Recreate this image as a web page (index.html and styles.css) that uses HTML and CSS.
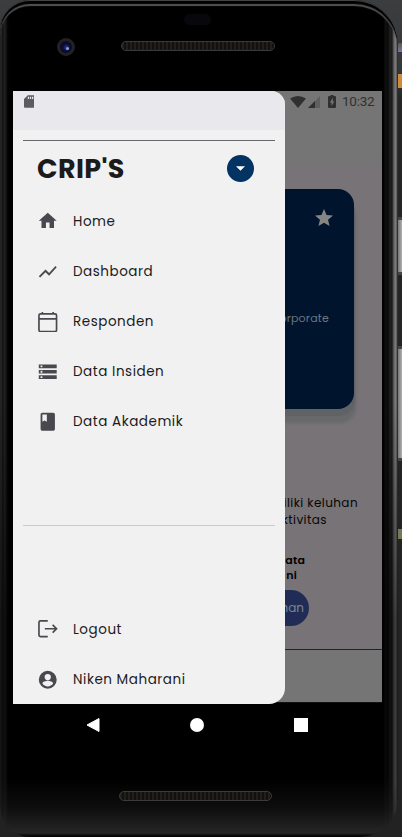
FILE: index.html
```html
<!DOCTYPE html>
<html lang="id">
<head>
<meta charset="utf-8">
<title>CRIP'S</title>
<link rel="stylesheet" href="styles.css">
</head>
<body>
<main class="desktop">
  <div class="phone">
    <header class="bezel-top">
      <div class="sensor"></div>
      <div class="camera-row"><div class="camera"><i></i></div><div class="speaker"></div></div>
    </header>
    <div class="screen">
      <section class="app">
        <div class="statusbar">
          <svg class="wifi" viewBox="0 0 16 12"><path d="M0 2.5Q8-2.5 16 2.5L8 12z"/></svg>
          <svg class="signal" viewBox="0 0 12 12"><path d="M0 12L12 0V12z" opacity=".3"/><path d="M0 12L7 5V12z"/></svg>
          <svg class="battery" viewBox="0 0 8 13"><path fill-rule="evenodd" d="M2.5 0h3v1H7q1 0 1 1v10q0 1-1 1H1q-1 0-1-1V2q0-1 1-1h1.500zM4.800 3L1.800 7.500h1.700V11l2.800-4.600H4.800z"/></svg>
          <span class="clock">10:32</span>
        </div>
        <div class="card">
          <svg class="star" viewBox="2 2 20 19"><path d="M12 17.270L18.180 21l-1.640-7.030L22 9.240l-7.190-.61L12 2 9.190 8.630 2 9.240l5.460 4.730L5.820 21z"/></svg>
          <span class="corporate">Corporate</span>
        </div>
        <p class="lead l1">iliki keluhan</p>
        <p class="lead l2">ktivitas</p>
        <p class="strong s1">ata</p>
        <p class="strong s2">ni</p>
        <div class="pill">han</div>
        <div class="tabbar"></div>
      </section>
      <aside class="drawer">
        <div class="drawer-status"><svg viewBox="0 0 11 13"><path fill-rule="evenodd" d="M4 0h6q1 0 1 1v11q0 1-1 1H1q-1 0-1-1V4zM4 1.500V4h1.300V1.500zM6.200 1.500V4h1.300V1.500zM8.400 1.500V4h1.300V1.500z"/></svg></div>
        <hr class="rule dark">
        <div class="brand"><h1>CRIP'S</h1><button class="toggle"><svg viewBox="0 0 10 5"><path d="M0 0h10L5 5z"/></svg></button></div>
        <nav class="menu">
          <a class="item"><svg viewBox="0 0 24 24"><path d="M10 20v-6h4v6h5v-8h3L12 3 2 12h3v8z"/></svg><span>Home</span></a>
          <a class="item"><svg viewBox="0 0 24 24"><path d="M3.500 18.490l6-6.010 4 4L22 6.920l-1.410-1.410-7.090 7.970-4-4L2 16.990z"/></svg><span>Dashboard</span></a>
          <a class="item"><svg class="line" viewBox="0 0 22 22"><rect x="2" y="3" width="18" height="18" rx="1.500"/><path d="M2 8h18M5.500 1v2M16.500 1v2"/></svg><span>Responden</span></a>
          <a class="item"><svg viewBox="0 0 24 24"><path fill-rule="evenodd" d="M2 20h20v-4H2zm2-3h2v2H4zM2 4v4h20V4zm4 3H4V5h2zm-4 7h20v-4H2zm2-3h2v2H4z"/></svg><span>Data Insiden</span></a>
          <a class="item"><svg viewBox="0 0 24 24"><path fill-rule="evenodd" d="M18 2H6c-1.100 0-2 .9-2 2v16c0 1.100.9 2 2 2h12c1.100 0 2-.9 2-2V4c0-1.100-.9-2-2-2zM6 4h5v8l-2.500-1.500L6 12z"/></svg><span>Data Akademik</span></a>
        </nav>
        <hr class="rule light">
        <nav class="menu account">
          <a class="item"><svg class="line" viewBox="0 0 22 22"><path d="M11 3H3.500Q2 3 2 4.500v13Q2 19 3.500 19H11M8 11h12M16 7l4 4-4 4"/></svg><span>Logout</span></a>
          <a class="item"><svg viewBox="0 0 24 24"><path fill-rule="evenodd" d="M12 2a10 10 0 1 0 0 20 10 10 0 0 0 0-20zm0 3.500a3.500 3.500 0 1 1 0 7 3.500 3.500 0 0 1 0-7zm0 14c-2.500 0-4.700-1.300-6-3.200.03-2 4-3.100 6-3.100s5.970 1.100 6 3.100c-1.300 1.900-3.500 3.200-6 3.200z"/></svg><span>Niken Maharani</span></a>
        </nav>
      </aside>
    </div>
    <div class="softkeys">
      <svg viewBox="0 0 14 16"><path d="M13 1.500v13L1 8z" stroke="#fff" stroke-linejoin="round"/></svg>
      <svg viewBox="0 0 14 14"><circle cx="7" cy="7" r="7"/></svg>
      <svg viewBox="0 0 14 14"><path d="M0 0h14v14H0z"/></svg>
    </div>
    <footer class="bezel-bottom"><div class="speaker"></div></footer>
  </div>
  <div class="behind">
    <div class="edge e1"></div><div class="edge e2"></div><div class="edge e3"></div><div class="edge e4"></div><div class="edge metal e5"></div><div class="edge e6"></div><div class="edge metal e7"></div><div class="edge e8"></div><div class="edge e9"></div>
  </div>
</main>
</body>
</html>
```
FILE: styles.css
```css
* { box-sizing: border-box; margin: 0; padding: 0; }
body { width: 402px; height: 837px; overflow: hidden; background: #222; font-family: Poppins, Inter, sans-serif; font-feature-settings: "cv11"; }
svg { display: block; fill: currentColor; flex: none; }
.desktop { display: flex; width: 402px; height: 837px; background: linear-gradient(#3c3d3f, #343536 80px, #252525 100px, #222); }
.phone {
  width: 398px; height: 837px; flex: none; padding: 0 0 0 13px; border-radius: 30px 44px 38px 30px;
  background: linear-gradient(transparent 780px, rgba(34,34,34,.4) 808px, rgba(42,42,42,.9) 833px, #050505 836px),
    linear-gradient(transparent 400px, rgba(0,0,0,.5) 620px),
    linear-gradient(90deg, #111 0, #353535 1px, #111 2px, #222 5px, #080808 7px, #000 9px, #000 384px, #111 385px, #0a0a0a 388px, #202020 390px, #1a1a1a 392px, #666 394px, #808080 396px, #444 397px, #222 398px);
  box-shadow: inset 0 1px #444, inset 0 4px 1px #000, inset 0 6px 1px #555;
  overflow: hidden;
}
.bezel-top { height: 91px; padding-top: 14px; }
.sensor { width: 27px; height: 11px; margin-left: 171px; border-radius: 6px; background: #08080c; }
.camera-row { display: flex; align-items: center; gap: 46px; height: 44px; padding-left: 44px; }
.camera { width: 18px; height: 18px; border-radius: 50%; border: 3px solid #222; background: #0a0d2a; display: grid; place-items: center; }
.camera i { width: 3px; height: 3px; margin: 3px 0 0 2px; border-radius: 50%; background: #8c9de8; box-shadow: -1px -1px 2px 1px #25307d; }
.speaker { width: 154px; height: 10px; border-radius: 5px; border: 1px solid #3b3b3b; background: repeating-linear-gradient(90deg, #22201b 0 2px, #12110f 2px 4px); }
.camera-row .speaker { margin-bottom: 3px; }
.screen { position: relative; width: 369px; height: 612.500px; overflow: hidden; background: #000; }
.app { height: 612px; display: flex; flex-direction: column; align-items: flex-end; background: linear-gradient(#757575 64px, #777376 76px); }
.statusbar { height: 21px; width: 92px; display: flex; align-items: center; color: #303030; flex: none; }
.wifi { width: 16px; height: 12px; }
.signal { width: 12px; height: 12px; margin-left: 2px; }
.battery { width: 8px; height: 13px; margin-left: 7.500px; }
.clock { font: 13.500px/21px Roboto, sans-serif; margin-left: 6.500px; letter-spacing: -.25px; }
.card { width: 325px; height: 220px; margin: 77px 28.500px 0 0; flex: none; border-radius: 0 16px 16px 0; background: #00142d; box-shadow: 1px 7px 1px #606366, 2px 14px 3px #68696b; display: flex; flex-direction: column; align-items: flex-end; }
.star { width: 18px; height: 17px; margin: 20px 20.500px 0 0; color: #858585; }
.corporate { margin: 84px 24.500px 0 0; font-size: 11px; line-height: 16px; color: #6c7683; letter-spacing: .2px; }
.lead { font-size: 12px; line-height: 17px; letter-spacing: .42px; color: #080708; }
.l1 { margin: 85px 24px 0 0; }
.l2 { margin-right: 55px; }
.strong { font-size: 11px; line-height: 16px; font-weight: 600; letter-spacing: .15px; color: #000; }
.s1 { margin: 24px 77px 0 0; }
.s2 { margin: -1px 85px 0 0; }
.pill { width: 110px; height: 36px; margin: 7px 73px 0 0; padding-right: 5px; border-radius: 18px; background: #202c56; color: #7f8490; text-align: right; font-size: 12px; line-height: 36px; flex: none; }
.tabbar { width: 369px; height: 54px; margin-top: auto; border-top: 1px solid #232323; background: #757575; border-bottom: 1px solid #111; }
.drawer { position: absolute; left: 0; top: 0; width: 272.300px; height: 612.500px; border-radius: 0 14px 16px 0; overflow: hidden; background: #f1f1f1; color: #1c1b1d; }
.drawer-status { height: 39px; padding: 4px 0 0 10.500px; background: #e8e8ed; color: #5c5c5f; }
.drawer-status svg { width: 10.500px; height: 13px; }
.rule { border: 0; height: 1px; width: 252px; margin-left: 10px; }
.dark { margin-top: 10px; background: #69696b; }
.light { margin-top: -13px; background: #cacacf; }
.brand { display: flex; align-items: center; justify-content: space-between; height: 54px; padding: 0 31.300px 0 24px; }
h1 { font-size: 27px; line-height: 40px; font-weight: 700; letter-spacing: .35px; padding-top: 1px; color: #1c1b1c; }
.toggle { border: 0; width: 27px; height: 27px; border-radius: 50%; background: #033363; color: #fff; display: grid; place-items: center; }
.toggle svg { width: 9px; height: 5px; }
.menu { display: flex; flex-direction: column; height: 343px; padding-top: 1.100px; }
.item { height: 50.200px; display: flex; align-items: center; gap: 14px; padding-left: 24px; font-size: 13.500px; letter-spacing: .54px; font-weight: 400; line-height: 20px; white-space: nowrap; flex: none; }
.item span { padding-top: 1px; }
.item svg { width: 21.500px; height: 21.500px; margin-right: .5px; color: #49484e; }
.item .line { fill: none; stroke: currentColor; stroke-width: 1.700; }
.account { height: auto; margin-top: 77px; }
.softkeys { width: 222px; height: 44px; margin: -.5px 0 0 73px; display: flex; align-items: center; justify-content: space-between; color: #fff; }
.softkeys svg { width: 14px; height: 14px; }
.softkeys svg:first-child { height: 16px; }
.bezel-bottom { padding: 44px 0 0 106px; }
.bezel-bottom .speaker { width: 153px; }
.behind { width: 4px; display: flex; flex-direction: column; }
.edge { width: 4px; flex: none; }
.e1 { height: 43px; }
.e2 { height: 9px; background: linear-gradient(#555, #77799c); }
.e3 { height: 22px; }
.e4 { height: 14px; background: #d08b38; }
.e5 { height: 58px; margin-top: 129px; }
.e6 { height: 71px; }
.e7 { height: 115px; }
.metal { background: linear-gradient(90deg, #777, #b0b0b0); border: solid #444; border-width: 3px 0; }
.e8 { height: 68px; }
.e9 { height: 10px; background: #77775a; }
```
